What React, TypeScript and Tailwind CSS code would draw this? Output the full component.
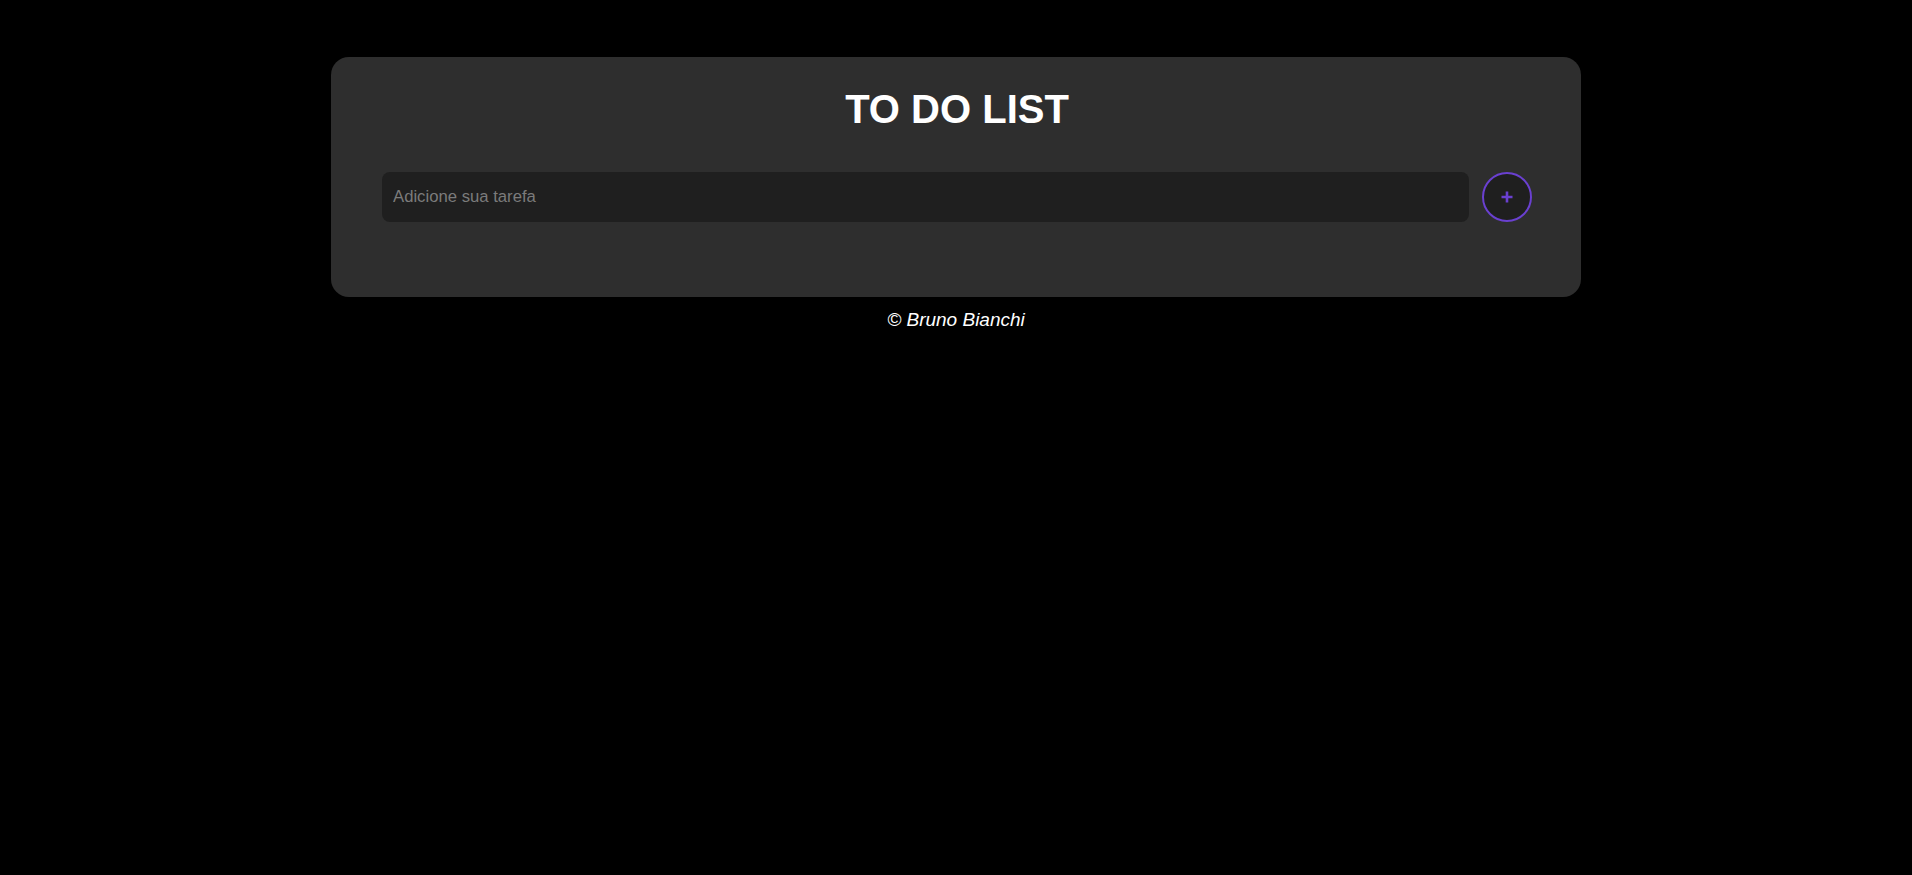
export default function App() {
  return (
    <main
      className="min-h-screen bg-black pt-[57px]"
      style={{ fontFamily: '"Liberation Sans", Arial, sans-serif' }}
    >
      {/* Card */}
      <section className="mx-auto w-[1250px] rounded-[18px] bg-[#2e2e2e] pl-[51px] pr-[49px] pt-[30px] pb-[75px]">
        <h1 className="text-center text-[40px] leading-[45px] font-bold text-white">TO DO LIST</h1>

        <div className="mt-[40px] flex items-center gap-[13px]">
          <input
            type="text"
            placeholder="Adicione sua tarefa"
            className="h-[50px] flex-1 rounded-[8px] bg-[#1f1f1f] px-[11px] text-[16.7px] text-white outline-none placeholder:text-[#7b7b7b]"
          />
          <button className="flex h-[50px] w-[50px] items-center justify-center rounded-full border-2 border-[#6a40d0] bg-[#1f1f1f]">
            <svg width="12" height="12" viewBox="0 0 12 12">
              <path d="M6 0.5V11.5M0.5 6H11.5" stroke="#6a40d0" strokeWidth="2.6" />
            </svg>
          </button>
        </div>
      </section>

      <p className="mt-[12px] text-center text-[19px] leading-[21px] italic text-white">© Bruno Bianchi</p>
    </main>
  );
}
